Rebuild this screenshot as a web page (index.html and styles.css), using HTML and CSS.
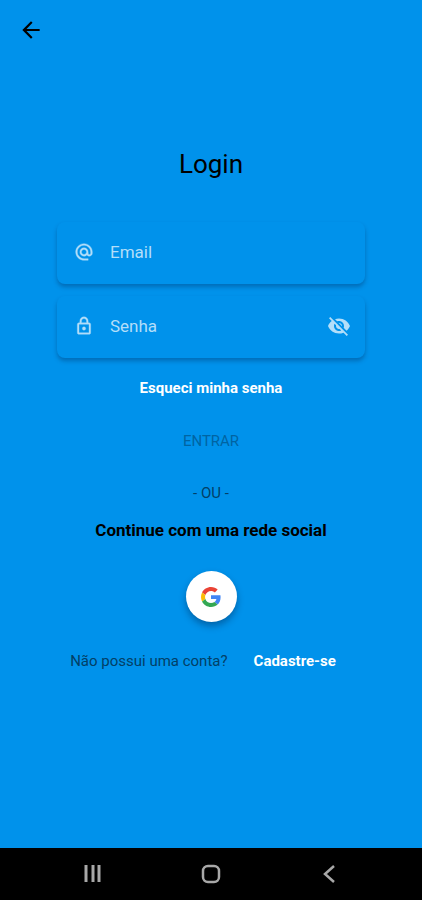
FILE: index.html
```html
<!DOCTYPE html>
<html lang="pt-BR">

<head>
    <meta charset="UTF-8">
    <meta name="viewport" content="width=device-width, initial-scale=1.0">
    <title>Login</title>
    <link rel="stylesheet" href="styles.css">
</head>

<body>
    <header class="top-bar">
        <button type="button" class="icon-button" aria-label="Voltar">
            <svg width="26" height="26" viewBox="0 0 24 24" fill="currentColor">
                <path d="M20 11H7.83l5.59-5.59L12 4l-8 8 8 8 1.41-1.41L7.83 13H20v-2z" />
            </svg>
        </button>
    </header>

    <main class="content">
        <h1>Login</h1>

        <form id="login-form" class="login-form">
            <div class="field">
                <label for="email" aria-label="Email">
                    <svg width="20" height="20" viewBox="0 0 24 24" fill="currentColor" stroke="currentColor" stroke-width="0.4">
                        <path d="M12 1.95c-5.52 0-10 4.48-10 10s4.48 10 10 10h5v-2h-5c-4.34 0-8-3.66-8-8s3.66-8 8-8 8 3.66 8 8v1.43c0 .79-.71 1.57-1.5 1.57s-1.5-.78-1.5-1.57v-1.43c0-2.76-2.24-5-5-5s-5 2.24-5 5 2.24 5 5 5c1.38 0 2.64-.56 3.54-1.47.65.89 1.77 1.47 2.96 1.47 1.97 0 3.5-1.6 3.5-3.57v-1.43c0-5.52-4.48-10-10-10zm0 13c-1.66 0-3-1.34-3-3s1.34-3 3-3 3 1.34 3 3-1.34 3-3 3z" />
                    </svg>
                </label>
                <input type="email" id="email" placeholder="Email">
            </div>
            <div class="field">
                <label for="password" aria-label="Senha">
                    <svg width="20" height="20" viewBox="0 0 24 24" fill="currentColor" stroke="currentColor" stroke-width="0.4">
                        <path d="M18 8h-1V6c0-2.76-2.24-5-5-5S7 3.24 7 6v2H6c-1.1 0-2 .9-2 2v10c0 1.1.9 2 2 2h12c1.1 0 2-.9 2-2V10c0-1.1-.9-2-2-2zM9 6c0-1.66 1.34-3 3-3s3 1.34 3 3v2H9V6zm9 14H6V10h12v10zm-6-3c1.1 0 2-.9 2-2s-.9-2-2-2-2 .9-2 2 .9 2 2 2z" />
                    </svg>
                </label>
                <input type="password" id="password" placeholder="Senha">
                <button type="button" class="icon-button" id="toggle-password" aria-label="Mostrar senha">
                    <svg width="24" height="24" viewBox="0 0 24 24" fill="currentColor">
                        <path d="M12 7c2.76 0 5 2.24 5 5 0 .65-.13 1.26-.36 1.83l2.92 2.92c1.51-1.26 2.7-2.89 3.43-4.75-1.73-4.39-6-7.5-11-7.5-1.4 0-2.74.25-3.98.7l2.16 2.16C10.74 7.13 11.35 7 12 7zM2 4.27l2.28 2.28.46.46C3.08 8.3 1.78 10.02 1 12c1.73 4.39 6 7.5 11 7.5 1.55 0 3.03-.3 4.38-.84l.42.42L19.73 22 21 20.73 3.27 3 2 4.27zM7.53 9.8l1.55 1.55c-.05.21-.08.43-.08.65 0 1.66 1.34 3 3 3 .22 0 .44-.03.65-.08l1.55 1.55c-.67.33-1.41.53-2.2.53-2.76 0-5-2.24-5-5 0-.79.2-1.53.53-2.2zm4.31-.78l3.15 3.15.02-.16c0-1.66-1.34-3-3-3l-.17.01z" />
                    </svg>
                </button>
            </div>

            <a href="#" class="forgot">Esqueci minha senha</a>
            <button type="submit" class="submit" id="submit" disabled>ENTRAR</button>
        </form>

        <p class="divider">- OU -</p>
        <h2>Continue com uma rede social</h2>

        <button type="button" class="google" aria-label="Continuar com Google">
            <svg width="20" height="20" viewBox="0 0 48 48">
                <path fill="#EA4335" d="M24 9.5c3.54 0 6.71 1.22 9.21 3.6l6.85-6.85C35.9 2.38 30.47 0 24 0 14.62 0 6.51 5.38 2.56 13.22l7.98 6.19C12.43 13.72 17.74 9.5 24 9.5z" />
                <path fill="#4285F4" d="M46.98 24.55c0-1.57-.15-3.09-.38-4.55H24v9.02h12.94c-.58 2.96-2.26 5.48-4.78 7.18l7.73 6c4.51-4.18 7.09-10.36 7.09-17.65z" />
                <path fill="#FBBC05" d="M10.53 28.59c-.48-1.45-.76-2.99-.76-4.59s.27-3.14.76-4.59l-7.98-6.19C.92 16.46 0 20.12 0 24s.92 7.54 2.56 10.78l7.97-6.19z" />
                <path fill="#34A853" d="M24 48c6.48 0 11.93-2.13 15.89-5.81l-7.73-6c-2.15 1.45-4.92 2.3-8.16 2.3-6.26 0-11.57-4.22-13.47-9.91l-7.98 6.19C6.51 42.62 14.62 48 24 48z" />
            </svg>
        </button>

        <div class="signup">
            <span>Não possui uma conta?</span>
            <a href="#">Cadastre-se</a>
        </div>
    </main>

    <nav class="nav-bar">
        <button type="button" class="icon-button" aria-label="Recentes">
            <svg width="22" height="22" viewBox="0 0 22 22" fill="none" stroke="currentColor" stroke-width="3">
                <path d="M4 2v17M11 2v17M17 2v17" />
            </svg>
        </button>
        <button type="button" class="icon-button" aria-label="Início">
            <svg width="22" height="22" viewBox="0 0 22 22" fill="none" stroke="currentColor" stroke-width="2.5">
                <rect x="3" y="3" width="16" height="16" rx="5" />
            </svg>
        </button>
        <button type="button" class="icon-button" aria-label="Voltar">
            <svg width="22" height="22" viewBox="0 0 22 22" fill="none" stroke="currentColor" stroke-width="2.5">
                <path d="M16 3l-9 8 9 8" />
            </svg>
        </button>
    </nav>

    <script>
        const email = document.getElementById('email');
        const password = document.getElementById('password');

        // Enable the submit button only when both fields are filled
        document.getElementById('login-form').addEventListener('input', () => {
            document.getElementById('submit').disabled = !email.value || !password.value;
        });

        // Show or hide the password
        document.getElementById('toggle-password').addEventListener('click', () => {
            password.type = password.type === 'password' ? 'text' : 'password';
        });
    </script>
</body>

</html>
```
FILE: styles.css
```css
* {
    box-sizing: border-box;
}

body {
    display: flex;
    flex-direction: column;
    min-height: 100vh;
    margin: 0;
    font-family: Roboto, sans-serif;
    font-size: 15px;
    line-height: 20px;
    background-color: #0092eb;
    color: #000;
}

button,
input {
    padding: 0;
    border: none;
    background: none;
    color: inherit;
    font: inherit;
}

button {
    cursor: pointer;
}

a {
    color: #fff;
    font-weight: 700;
    text-decoration: none;
}

svg {
    display: block;
}

.icon-button {
    display: flex;
    align-items: center;
    justify-content: center;
}

.top-bar {
    display: flex;
    align-items: center;
    height: 60px;
    padding: 0 18px;
}

.content {
    flex: 1;
    display: flex;
    flex-direction: column;
    align-items: center;
    padding: 88px 57px 32px;
}

h1 {
    margin: 0 0 42px;
    font-size: 26px;
    font-weight: 400;
    line-height: 32px;
}

.login-form {
    display: flex;
    flex-direction: column;
    align-items: center;
    width: 100%;
}

.field {
    display: flex;
    align-items: center;
    gap: 16px;
    width: 100%;
    height: 62px;
    margin-bottom: 12px;
    padding: 0 14px 3px 17px;
    border-radius: 8px;
    background-color: #0092eb;
    box-shadow: 0 3px 4px rgba(0, 40, 90, 0.35);
    color: #b3def9;
}

.field input {
    flex: 1;
    min-width: 0;
    font-size: 17px;
    outline: none;
}

.field input::placeholder {
    color: #b3def9;
    opacity: 1;
}

.forgot {
    margin: 8px 0 33px;
}

.submit {
    color: #0064a2;
}

.submit:enabled {
    color: #fff;
}

.divider {
    margin: 32px 0 17px;
    color: #033f66;
}

h2 {
    margin: 0 0 31px;
    font-size: 17px;
    font-weight: 700;
    line-height: 20px;
    white-space: nowrap;
}

.google {
    display: flex;
    align-items: center;
    justify-content: center;
    width: 51px;
    height: 51px;
    margin-bottom: 29px;
    border-radius: 50%;
    background-color: #fff;
    box-shadow: 0 4px 7px rgba(0, 30, 70, 0.4);
}

.signup {
    display: flex;
    gap: 26px;
    margin-right: 16px;
    color: #033f66;
    white-space: nowrap;
}

.nav-bar {
    display: flex;
    justify-content: space-around;
    align-items: center;
    height: 52px;
    padding: 0 34px;
    background-color: #000;
    color: #a8a8a8;
}
```
